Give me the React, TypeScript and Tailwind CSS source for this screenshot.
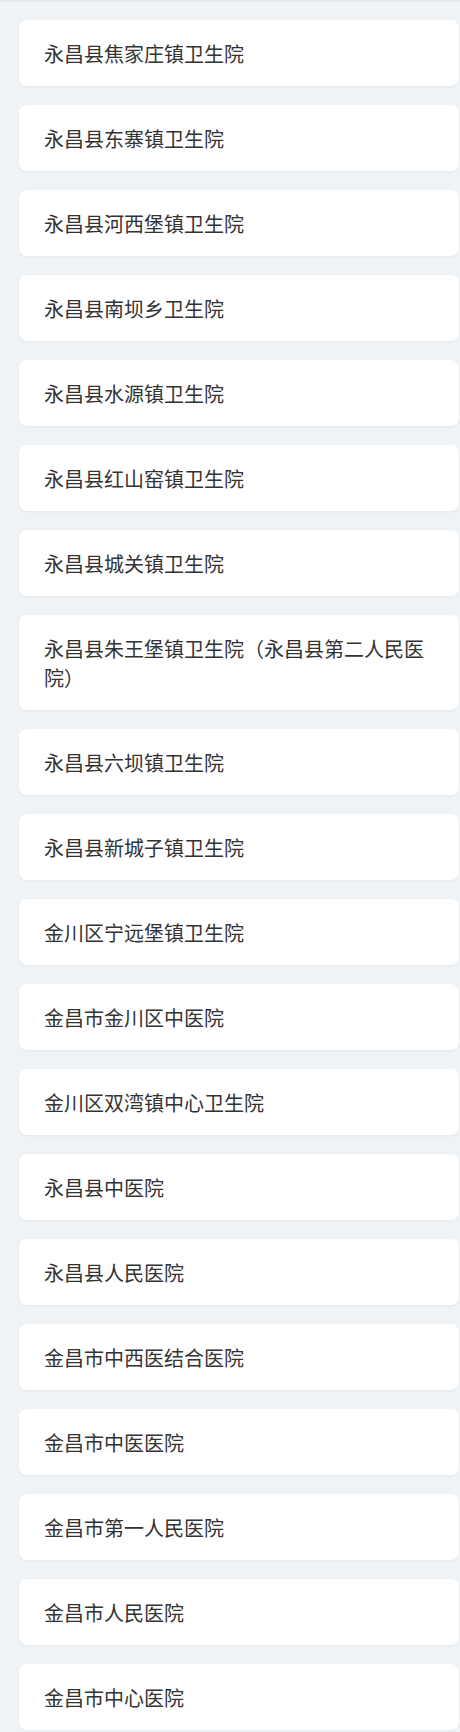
import React from "react";

const items = [
  "永昌县焦家庄镇卫生院",
  "永昌县东寨镇卫生院",
  "永昌县河西堡镇卫生院",
  "永昌县南坝乡卫生院",
  "永昌县水源镇卫生院",
  "永昌县红山窑镇卫生院",
  "永昌县城关镇卫生院",
  "永昌县朱王堡镇卫生院（永昌县第二人民医院）",
  "永昌县六坝镇卫生院",
  "永昌县新城子镇卫生院",
  "金川区宁远堡镇卫生院",
  "金昌市金川区中医院",
  "金川区双湾镇中心卫生院",
  "永昌县中医院",
  "永昌县人民医院",
  "金昌市中西医结合医院",
  "金昌市中医医院",
  "金昌市第一人民医院",
  "金昌市人民医院",
  "金昌市中心医院",
];

export default function App() {
  return (
    <div
      className="min-h-[1732px] w-[460px] bg-[#eff3f6] border-t-2 border-[#e6eaed] pt-[18px] pl-[19px] pr-[1px]"
      style={{ fontFamily: '"Microsoft YaHei", "Noto Sans CJK SC", "Noto Sans", sans-serif' }}
    >
      <div className="flex flex-col gap-[19px]">
        {items.map((t) => (
          <div
            key={t}
            className="bg-white rounded-[8px] shadow-[0_1px_3px_rgba(0,0,0,0.05)] pl-[25px] pr-[26px] py-[18.5px] text-[20px] leading-[29px] text-[#333333]"
          >
            {t}
          </div>
        ))}
      </div>
    </div>
  );
}
